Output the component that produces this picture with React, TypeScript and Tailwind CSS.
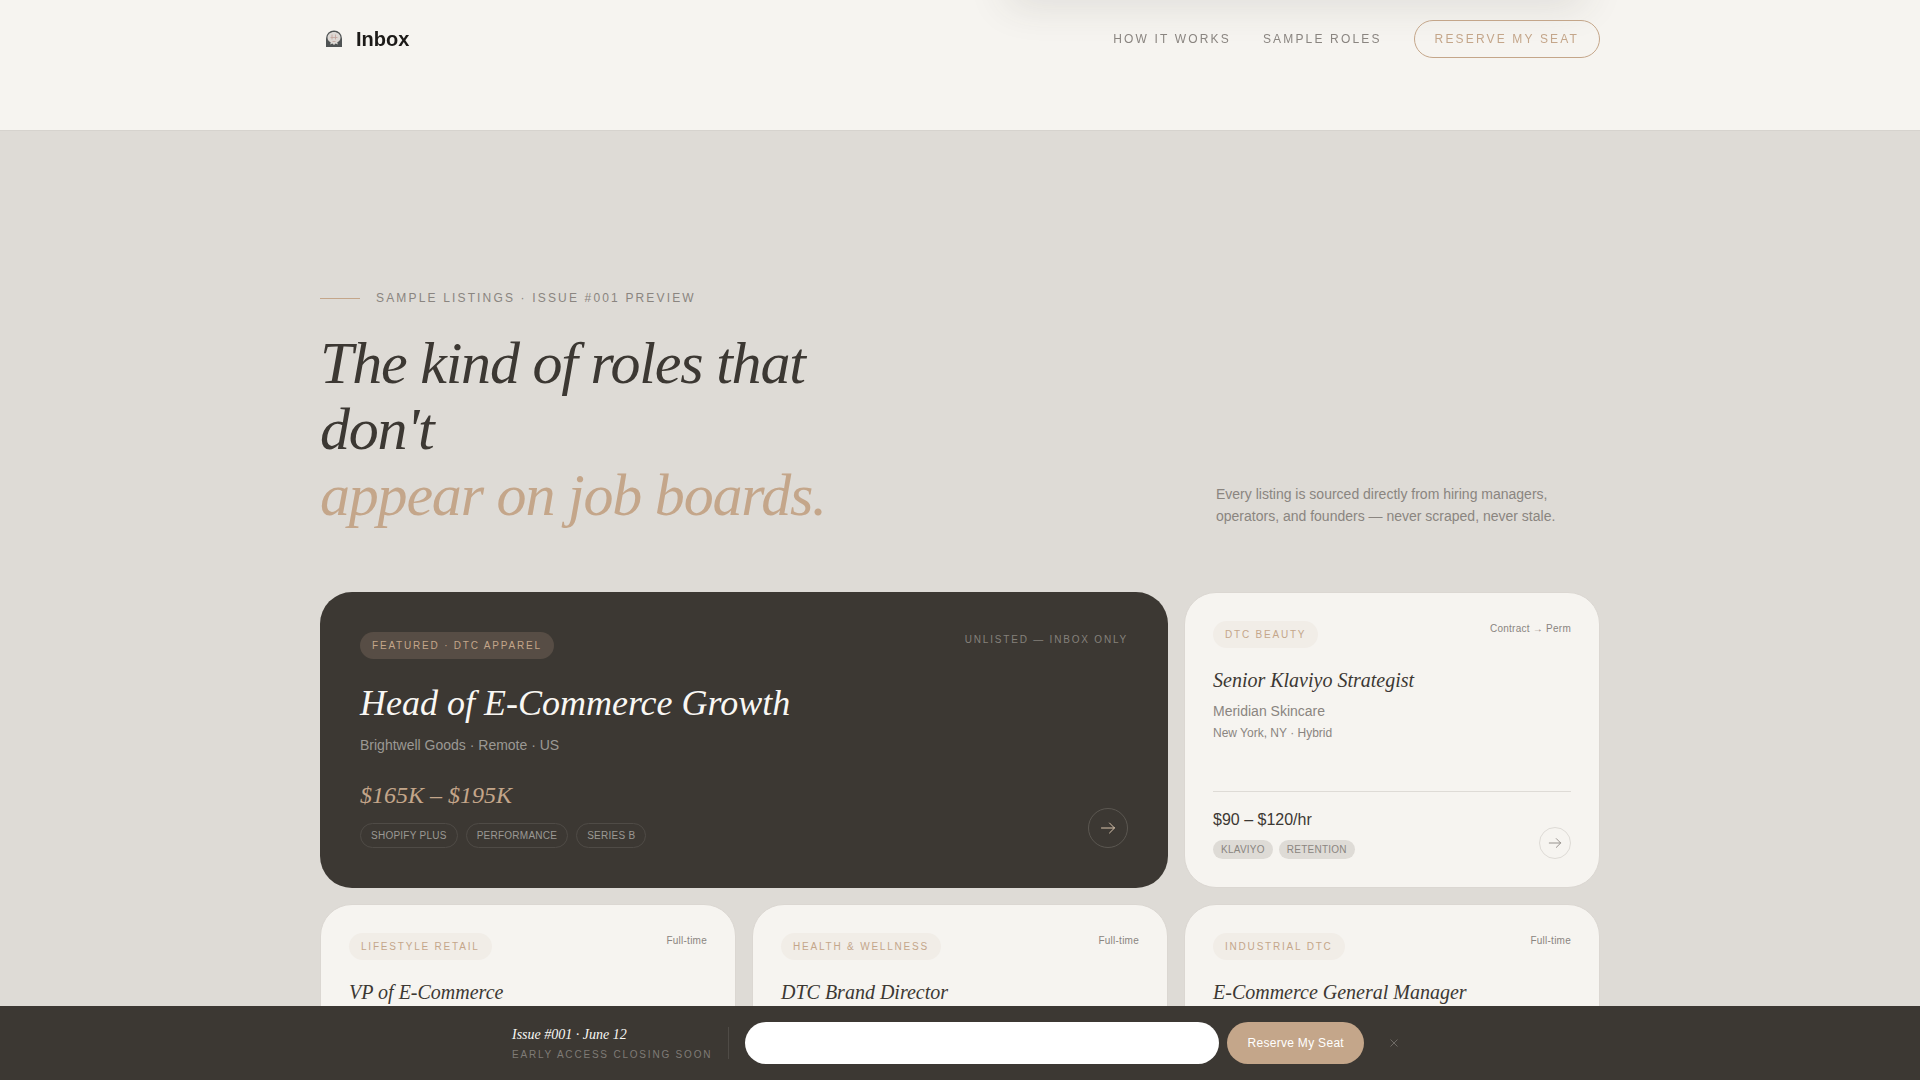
import { useState } from 'react';

type Role = {
  category: string;
  type: string;
  title: string;
  company?: string;
  location?: string;
  pay?: string;
  tags?: string[];
};

const roles: Role[] = [
  {
    category: 'DTC Beauty',
    type: 'Contract → Perm',
    title: 'Senior Klaviyo Strategist',
    company: 'Meridian Skincare',
    location: 'New York, NY · Hybrid',
    pay: '$90 – $120/hr',
    tags: ['Klaviyo', 'Retention'],
  },
  { category: 'Lifestyle Retail', type: 'Full-time', title: 'VP of E-Commerce' },
  { category: 'Health & Wellness', type: 'Full-time', title: 'DTC Brand Director' },
  { category: 'Industrial DTC', type: 'Full-time', title: 'E-Commerce General Manager' },
];

const featuredTags = ['Shopify Plus', 'Performance', 'Series B'];

function Logo() {
  return (
    <svg width="28" height="28" viewBox="0 0 28 28" aria-hidden="true">
      <path d="M6 22V13.5a8 8 0 0 1 16 0V22z" fill="#4f5354" />
      <path
        d="M14 7c3.600 0 6.500 2.400 6.500 5.600 0 2.400-1.300 4.200-3.200 4.600l.5 2.300-2.200-.9L14 20l-1.600-1.400-2.200.9.5-2.300c-1.900-.4-3.200-2.200-3.200-4.600C7.500 9.400 10.400 7 14 7z"
        fill="#dcd8d4"
      />
      <path d="M12 9.500v5M15.500 9.500v5M10.500 12.500h7M12.500 16.500h3" stroke="#c2a29a" strokeWidth="0.8" fill="none" />
    </svg>
  );
}

function Arrow({ size }: { size: number }) {
  return (
    <svg
      width={size}
      height={size}
      viewBox="0 0 16 16"
      fill="none"
      stroke="currentColor"
      strokeLinecap="round"
      strokeLinejoin="round"
      aria-hidden="true"
    >
      <path d="M1.500 8h13M9.500 3l5 5-5 5" />
    </svg>
  );
}

function Nav() {
  return (
    <header className="fixed inset-x-0 top-0 z-20">
      <nav className="mx-auto flex h-[78px] max-w-[1280px] items-center justify-between">
        <a href="#top" className="flex items-center gap-2 text-xl font-bold text-[#1c1a18]">
          <Logo />
          Inbox
        </a>
        <div className="flex items-center gap-8 text-xs uppercase tracking-[0.18em] text-[#8a8580]">
          <a href="#how">How it works</a>
          <a href="#roles">Sample roles</a>
          <a href="#reserve" className="rounded-full border border-[#c4a68a] px-5 py-2.5 text-[#c4a68a]">
            Reserve my seat
          </a>
        </div>
      </nav>
    </header>
  );
}

function FeaturedCard() {
  return (
    <article className="col-span-2 flex flex-col justify-between rounded-[32px] bg-[#3c3833] p-10">
      <div>
        <div className="flex items-start justify-between">
          <span className="rounded-full bg-[#574d45] px-3 py-1.5 text-[10px] leading-[15px] uppercase tracking-[0.18em] text-[#c4a68a]">
            Featured · DTC Apparel
          </span>
          <span className="text-[10px] leading-[15px] uppercase tracking-[0.18em] text-[#85817b]">
            Unlisted — Inbox only
          </span>
        </div>
        <h3 className="mt-6 font-['Liberation_Serif',serif] text-4xl italic text-[#f9f7f3]">
          Head of E-Commerce Growth
        </h3>
        <p className="mt-3 text-sm text-[#9b9894]">Brightwell Goods · Remote · US</p>
      </div>
      <div className="flex items-end justify-between">
        <div>
          <p className="font-['Liberation_Serif',serif] text-2xl italic text-[#c4a68a]">$165K – $195K</p>
          <ul className="mt-3 flex gap-2">
            {featuredTags.map((tag) => (
              <li
                key={tag}
                className="rounded-full border border-[#4f4b46] px-2.5 py-1 text-[10px] leading-[15px] uppercase tracking-wide text-[#9b9894]"
              >
                {tag}
              </li>
            ))}
          </ul>
        </div>
        <button
          aria-label="View Head of E-Commerce Growth"
          className="flex size-10 items-center justify-center rounded-full border border-[#5b5751] text-[#d8c3ac]"
        >
          <Arrow size={16} />
        </button>
      </div>
    </article>
  );
}

function RoleCard({ role }: { role: Role }) {
  return (
    <article className="flex min-h-[296px] flex-col justify-between rounded-[32px] border border-[#dbd7d2] bg-[#f6f4f0] p-7">
      <div>
        <div className="flex items-start justify-between">
          <span className="rounded-full bg-[#f1ede7] px-3 py-1.5 text-[10px] leading-[15px] uppercase tracking-[0.18em] text-[#c4a68a]">
            {role.category}
          </span>
          <span className="text-[10px] leading-[15px] tracking-wide text-[#8a8580]">{role.type}</span>
        </div>
        <h3 className="mt-5 font-['Liberation_Serif',serif] text-xl leading-[25px] italic text-[#3c3833]">
          {role.title}
        </h3>
        {role.company && <p className="mt-2 text-sm text-[#8a8580]">{role.company}</p>}
        {role.location && <p className="mt-1 text-xs text-[#8a8580]">{role.location}</p>}
      </div>
      {role.pay && (
        <div className="flex items-end justify-between border-t border-[#dedbd6] pt-4">
          <div>
            <p className="text-base text-[#3c3833]">{role.pay}</p>
            <ul className="mt-2 flex gap-1.5">
              {role.tags?.map((tag) => (
                <li
                  key={tag}
                  className="rounded-full bg-[#dedbd6] px-2 py-0.5 text-[10px] leading-[15px] uppercase tracking-wide text-[#8a8580]"
                >
                  {tag}
                </li>
              ))}
            </ul>
          </div>
          <button
            aria-label={`View ${role.title}`}
            className="flex size-8 items-center justify-center rounded-full border border-[#dedbd6] text-[#8a8580]"
          >
            <Arrow size={14} />
          </button>
        </div>
      )}
    </article>
  );
}

function ReserveBar({ onClose }: { onClose: () => void }) {
  return (
    <aside id="reserve" className="fixed inset-x-0 bottom-0 z-20 bg-[#3c3833] py-4">
      <form className="mx-auto flex max-w-4xl items-center gap-4" onSubmit={(e) => e.preventDefault()}>
        <div>
          <p className="font-['Liberation_Serif',serif] text-sm italic text-[#f9f7f3]">Issue #001 · June 12</p>
          <p className="mt-0.5 text-[10px] leading-[15px] uppercase tracking-[0.18em] text-[#7f7b76]">
            Early access closing soon
          </p>
        </div>
        <div className="h-8 w-px bg-[#4f4b46]" />
        <div className="flex flex-1 gap-2">
          <input
            type="email"
            aria-label="Email address"
            className="h-[42px] min-w-0 flex-1 rounded-full bg-white px-5 text-xs text-[#3c3833] outline-none"
          />
          <button type="submit" className="rounded-full bg-[#c4a68a] px-5 text-xs tracking-wide text-white">
            Reserve My Seat
          </button>
        </div>
        <button
          type="button"
          aria-label="Dismiss"
          onClick={onClose}
          className="flex size-7 items-center justify-center text-[#7b7772]"
        >
          <svg width="8" height="8" viewBox="0 0 8 8" stroke="currentColor" strokeWidth="0.8" aria-hidden="true">
            <path d="M0.500 0.500l7 7M7.500 0.500l-7 7" />
          </svg>
        </button>
      </form>
    </aside>
  );
}

export default function App() {
  const [showBar, setShowBar] = useState(true);

  return (
    <div id="top" className="h-screen overflow-hidden bg-[#f6f4f0] font-['Liberation_Sans',Arial,sans-serif]">
      <Nav />
      {/* tail of the hero, its card casts a shadow downwards */}
      <div className="mx-auto flex h-[130px] max-w-[1280px] justify-end">
        <div className="-mt-10 mr-3 h-8 w-[584px] rounded-[32px] shadow-[0_12px_40px_rgba(60,56,50,0.14)]" />
      </div>
      <section id="roles" className="border-t border-[#d6d3ce] bg-[#dedbd6] pt-40">
        <div className="mx-auto max-w-[1280px]">
          <div className="mb-16 flex items-end justify-between">
            <div>
              <div className="mb-6 flex items-center gap-4">
                <span className="h-px w-10 bg-[#c4a68a]" />
                <span className="text-xs leading-[15px] uppercase tracking-[0.18em] text-[#8a8580]">
                  Sample listings · Issue #001 preview
                </span>
              </div>
              <h2 className="max-w-xl font-['Liberation_Serif',serif] text-6xl leading-[66px] italic tracking-[-0.02em] text-[#3c3833]">
                The kind of roles that don't
                <br />
                <span className="text-[#c4a68a]">appear on job boards.</span>
              </h2>
            </div>
            <p className="w-96 text-sm leading-relaxed text-[#8a8580]">
              Every listing is sourced directly from hiring managers, operators, and founders — never scraped, never
              stale.
            </p>
          </div>
          <div className="grid grid-cols-3 gap-4">
            <FeaturedCard />
            {roles.map((role) => (
              <RoleCard key={role.title} role={role} />
            ))}
          </div>
        </div>
      </section>
      {showBar && <ReserveBar onClose={() => setShowBar(false)} />}
    </div>
  );
}
